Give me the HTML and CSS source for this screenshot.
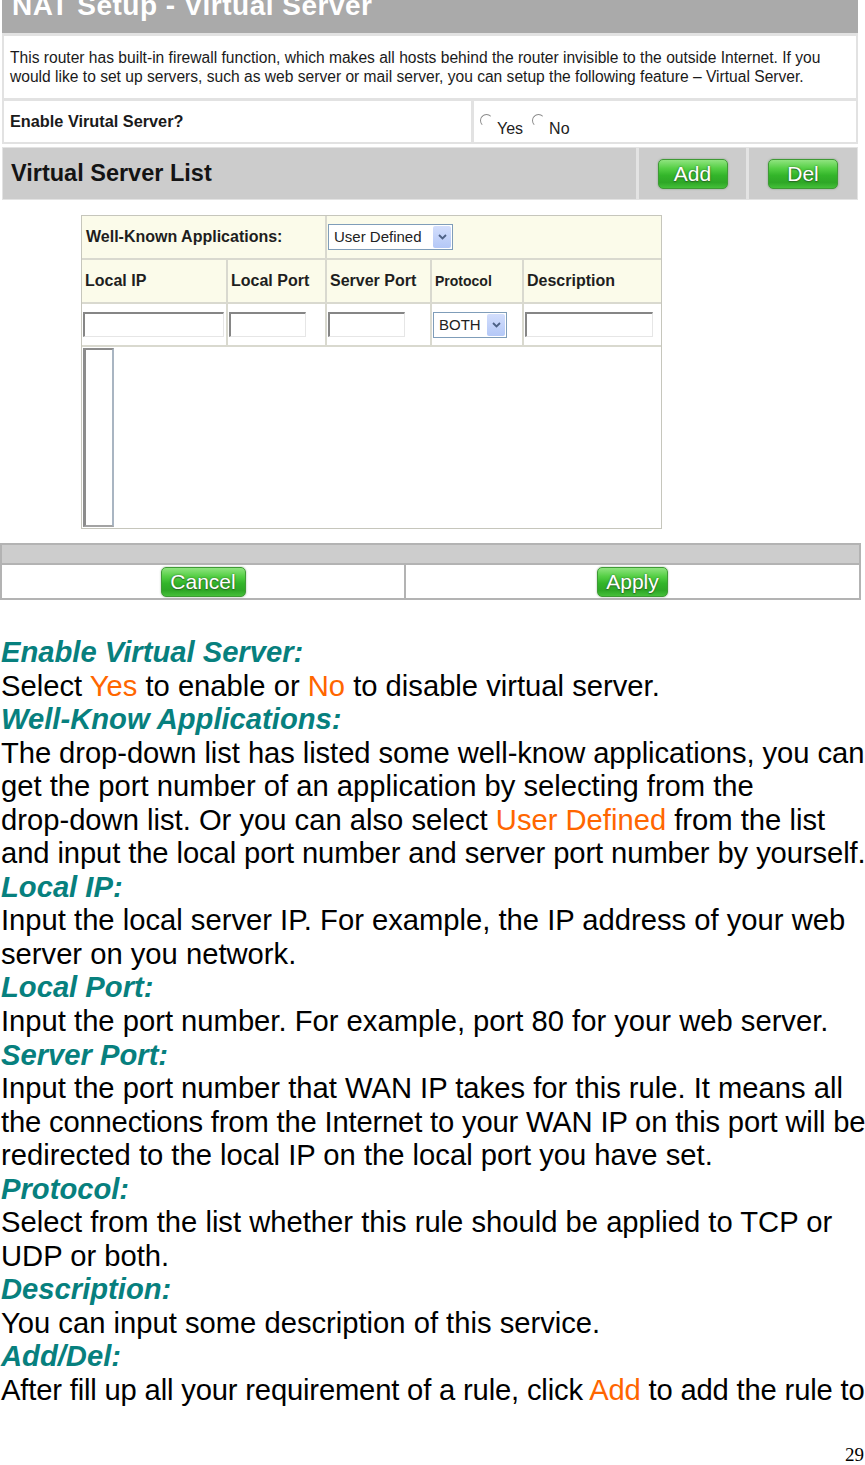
FILE: index.html
```html
<!DOCTYPE html>
<html>
<head>
<meta charset="utf-8">
<link rel="stylesheet" href="styles.css">
</head>
<body>
<div class="ui">
  <div class="panel">
    <div class="hdr"><span class="hdr-text">NAT Setup - Virtual Server</span></div>
    <div class="desc">This router has built-in firewall function, which makes all hosts behind the router invisible to the outside Internet. If you<br>would like to set up servers, such as web server or mail server, you can setup the following feature – Virtual Server.</div>
    <div class="enable">
      <div class="ecell lbl">Enable Virutal Server?</div>
      <div class="ecell radios"><span class="radio"></span><span class="rtext">Yes</span><span class="radio"></span><span class="rtext">No</span></div>
    </div>
  </div>

  <div class="listbar">
    <div class="lcell title">Virtual Server List</div>
    <div class="lcell center"><span class="gbtn w70">Add</span></div>
    <div class="lcell center"><span class="gbtn w70">Del</span></div>
  </div>

  <div class="inner">
    <div class="icell hd span2 pl4">Well-Known Applications:</div>
    <div class="icell span3"><div class="sel sel-app"><span class="sel-text">User Defined</span><span class="sel-btn"><svg width="9" height="6" viewBox="0 0 9 6"><path d="M1 1 L4.5 4.5 L8 1" fill="none" stroke="#4d6185" stroke-width="1.8"/></svg></span></div></div>

    <div class="icell hd">Local IP</div>
    <div class="icell hd">Local Port</div>
    <div class="icell hd">Server Port</div>
    <div class="icell hd small">Protocol</div>
    <div class="icell hd">Description</div>

    <div class="icell inp"><div class="tbox w141"></div></div>
    <div class="icell inp"><div class="tbox w77"></div></div>
    <div class="icell inp"><div class="tbox w77"></div></div>
    <div class="icell inp"><div class="sel sel-proto"><span class="sel-text">BOTH</span><span class="sel-btn"><svg width="9" height="6" viewBox="0 0 9 6"><path d="M1 1 L4.5 4.5 L8 1" fill="none" stroke="#4d6185" stroke-width="1.8"/></svg></span></div></div>
    <div class="icell inp"><div class="tbox w128"></div></div>

    <div class="icell list span5"><div class="listbox"></div></div>
  </div>

  <div class="bottom">
    <div class="bgray"></div>
    <div class="bwhite">
      <div class="bcell"><span class="gbtn w85">Cancel</span></div>
      <div class="bcell"><span class="gbtn w71">Apply</span></div>
    </div>
  </div>
</div>

<div class="doc">
  <div class="h">Enable Virtual Server:</div>
  <div class="t">Select <span class="o">Yes</span> to enable or <span class="o">No</span> to disable virtual server.</div>
  <div class="h">Well-Know Applications:</div>
  <div class="t"><span class="ls1">The drop-down list has listed some well-know applications, you can</span><br>get the port number of an application by selecting from the<br>drop-down list. Or you can also select <span class="o">User Defined</span> from the list<br><span class="ls2">and input the local port number and server port number by yourself.</span></div>
  <div class="h">Local IP:</div>
  <div class="t">Input the local server IP. For example, the IP address of your web<br>server on you network.</div>
  <div class="h">Local Port:</div>
  <div class="t">Input the port number. For example, port 80 for your web server.</div>
  <div class="h">Server Port:</div>
  <div class="t">Input the port number that WAN IP takes for this rule. It means all<br><span class="ls3">the connections from the Internet to your WAN IP on this port will be</span><br>redirected to the local IP on the local port you have set.</div>
  <div class="h">Protocol:</div>
  <div class="t">Select from the list whether this rule should be applied to TCP or<br>UDP or both.</div>
  <div class="h">Description:</div>
  <div class="t">You can input some description of this service.</div>
  <div class="h">Add/Del:</div>
  <div class="t"><span class="ls3">After fill up all your requirement of a rule, click <span class="o">Add</span> to add the rule to</span></div>
</div>
<div class="pageno">29</div>
</body>
</html>
```

FILE: styles.css
```css
html, body {
  margin: 0;
  padding: 0;
  background: #ffffff;
}
body {
  width: 865px;
  font-family: "Liberation Sans", Arial, sans-serif;
  color: #000;
}

/* ---------- router UI screenshot ---------- */
.ui {
  width: 865px;
}
.panel {
  margin-left: 2px;
  width: 856px;
  background: #e2e2e2;
  padding-bottom: 2px;
  display: flex;
  flex-direction: column;
  gap: 3px;
}
.hdr {
  height: 33px;
  background: #aaaaaa;
  overflow: hidden;
}
.hdr-text {
  display: block;
  margin: -8px 0 0 10px;
  font-weight: bold;
  font-size: 28px;
  line-height: 28px;
  letter-spacing: 0.5px;
  color: #ffffff;
  white-space: nowrap;
}
.desc {
  margin: 0 2px;
  height: 62px;
  box-sizing: border-box;
  padding: 12px 0 0 6px;
  background: #ffffff;
  font-size: 15.6px;
  line-height: 19px;
  color: #1a1a1a;
  white-space: nowrap;
}
.enable {
  margin: 0 2px;
  display: grid;
  grid-template-columns: 467px 1fr;
  gap: 3px;
  height: 41px;
}
.ecell {
  background: #ffffff;
  display: flex;
  align-items: center;
}
.lbl {
  padding-left: 6px;
  font-weight: bold;
  font-size: 16.3px;
  color: #1a1a1a;
}
.radios {
  padding-left: 6px;
  font-size: 16px;
  color: #222;
  align-items: flex-start;
  padding-top: 12px;
  box-sizing: border-box;
}
.radio {
  display: inline-block;
  width: 11px;
  height: 11px;
  border-radius: 50%;
  border: 1px solid transparent;
  border-color: #8a8a8a transparent transparent #8a8a8a;
  margin-top: 1px;
  margin-right: 4px;
}
.rtext {
  margin-top: 7px;
  margin-right: 9px;
  line-height: 18px;
}

.listbar {
  margin: 3px 0 0 2px;
  width: 856px;
  box-sizing: border-box;
  padding: 1px;
  background: #e3e3e3;
  display: grid;
  grid-template-columns: 633px 107px 108px;
  gap: 3px;
}
.lcell {
  height: 51px;
  background: #cccccc;
  display: flex;
  align-items: center;
}
.title {
  padding-left: 8px;
  font-weight: bold;
  font-size: 23.5px;
  color: #141414;
}
.center {
  justify-content: center;
}

.gbtn {
  display: inline-block;
  box-sizing: border-box;
  height: 30px;
  border-radius: 5px;
  border: 1px solid #3f9a35;
  background: linear-gradient(#8fe47f 0%, #55cf45 30%, #33b52a 55%, #2ea726 80%, #45c03a 100%);
  box-shadow: 0 0 2px rgba(80, 120, 80, 0.6);
  color: #ffffff;
  font-size: 21px;
  line-height: 27px;
  text-align: center;
  text-shadow: 0 0 2px #2b6b25, 0 1px 1px #2b6b25;
}
.w70 { width: 70px; }
.w85 { width: 85px; }
.w71 { width: 71px; }

.inner {
  margin: 15px 0 0 81px;
  width: 581px;
  box-sizing: border-box;
  border: 1px solid #c6c6bc;
  background: #d9d9cf;
  display: grid;
  grid-template-columns: 144px 97px 103px 90px 137px;
  grid-template-rows: 42px 42px 41px 181px;
  gap: 2px;
}
.icell {
  background: #fbfbea;
  display: flex;
  align-items: center;
  padding-left: 3px;
  box-sizing: border-box;
}
.hd {
  font-weight: bold;
  font-size: 16px;
  color: #1e1e1e;
}
.hd.small {
  font-size: 14px;
}
.pl4 { padding-left: 4px; }
.span2 { grid-column: span 2; }
.span3 { grid-column: span 3; padding-left: 1px; }
.span5 { grid-column: span 5; }
.inp {
  background: #ffffff;
  padding-left: 1px;
}
.list {
  background: #ffffff;
  align-items: flex-start;
  padding: 1px 0 0 1px;
}
.tbox {
  height: 25px;
  box-sizing: border-box;
  background: #ffffff;
  border-top: 2px solid #868686;
  border-left: 2px solid #868686;
  border-right: 1px solid #e6e6e6;
  border-bottom: 1px solid #e6e6e6;
}
.w141 { width: 141px; }
.w77 { width: 77px; }
.w128 { width: 128px; }

.sel {
  height: 26px;
  box-sizing: border-box;
  border: 1px solid #7f9db9;
  background: #ffffff;
  display: flex;
  align-items: stretch;
  justify-content: space-between;
  font-size: 15px;
  font-weight: normal;
  color: #222;
}
.sel-app { width: 125px; }
.sel-proto { width: 74px; }
.sel-text {
  padding-left: 5px;
  line-height: 24px;
  white-space: nowrap;
}
.sel-btn {
  width: 18px;
  margin: 1px;
  border-radius: 2px;
  background: linear-gradient(#d3defc, #b4c8f7);
  display: flex;
  align-items: center;
  justify-content: center;
}
.listbox {
  width: 31px;
  height: 179px;
  box-sizing: border-box;
  border-top: 2px solid #8c8c8c;
  border-left: 3px solid #8c8c8c;
  border-right: 2px solid #a9b5c2;
  border-bottom: 2px solid #a3a3a3;
  background: #ffffff;
}

.bottom {
  margin-top: 14px;
  width: 861px;
  box-sizing: border-box;
  border: 2px solid #b3b3b3;
  background: #b3b3b3;
  display: flex;
  flex-direction: column;
  gap: 2px;
}
.bgray {
  height: 18px;
  background: #cdcdcd;
}
.bwhite {
  display: grid;
  grid-template-columns: 402px 1fr;
  gap: 2px;
}
.bcell {
  height: 33px;
  background: #ffffff;
  display: flex;
  align-items: center;
  justify-content: center;
}

/* ---------- document text ---------- */
.doc {
  margin-top: 36px;
  padding-left: 1px;
  font-size: 29.2px;
  line-height: 33.55px;
  white-space: nowrap;
}
.h {
  font-weight: bold;
  font-style: italic;
  color: #07807e;
}
.t {
  color: #000;
}
.ls1 { letter-spacing: -0.07px; }
.ls2 { letter-spacing: -0.1px; }
.ls3 { letter-spacing: -0.17px; }
.o {
  color: #ff6600;
}
.pageno {
  margin-top: 37px;
  text-align: right;
  padding-right: 1px;
  font-family: "Liberation Serif", "Times New Roman", serif;
  font-size: 19px;
  line-height: 20px;
}
```
